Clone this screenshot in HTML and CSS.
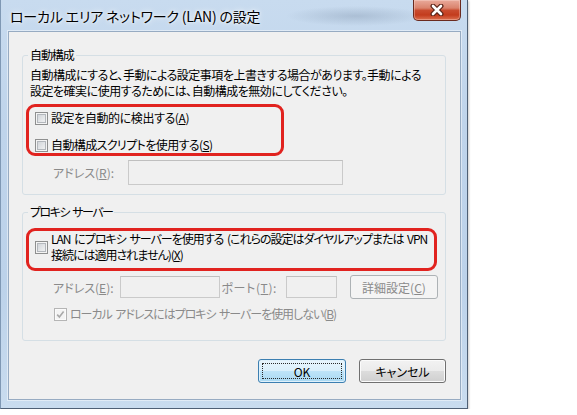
FILE: index.html
```html
<!DOCTYPE html>
<html lang="ja">
<head>
<meta charset="utf-8">
<title>ローカル エリア ネットワーク (LAN) の設定</title>
<link rel="stylesheet" href="styles.css">
</head>
<body>
<div class="window">
  <div class="titlebar">
    <span class="title">ローカル エリア ネットワーク (LAN) の設定</span>
    <div class="close" aria-label="閉じる">
      <svg width="16" height="12" viewBox="0 0 16 12">
        <path d="M4 2 L12 10 M12 2 L4 10" stroke="#5a2418" stroke-width="5" stroke-linecap="round" fill="none"/>
        <path d="M4 2 L12 10 M12 2 L4 10" stroke="#ffffff" stroke-width="2.6" stroke-linecap="round" fill="none"/>
      </svg>
    </div>
  </div>
  <div class="client">
    <fieldset class="group g1">
      <legend class="leg1">自動構成</legend>
      <p class="desc">自動構成にすると、手動による設定事項を上書きする場合があります。手動による<br>設定を確実に使用するためには、自動構成を無効にしてください。</p>
      <div class="mark mark1">
        <label class="check"><span class="box"></span><span>設定を自動的に検出する(<u>A</u>)</span></label>
        <label class="check"><span class="box"></span><span class="kata">自動構成スクリプトを使用する(<u>S</u>)</span></label>
      </div>
      <div class="row row-r">
        <span class="dlabel lab-r">アドレス(<u>R</u>):</span>
        <span class="input in-r"></span>
      </div>
    </fieldset>
    <fieldset class="group g2">
      <legend class="leg2">プロキシ サーバー</legend>
      <div class="mark mark2">
        <label class="check multi"><span class="box"></span><span class="lan">LAN にプロキシ サーバーを使用する (これらの設定はダイヤルアップまたは VPN<br>接続には適用されません)(<u>X</u>)</span></label>
      </div>
      <div class="row row-e">
        <span class="dlabel lab-e">アドレス(<u>E</u>):</span>
        <span class="input in-e"></span>
        <span class="dlabel lab-t">ポート(<u>T</u>):</span>
        <span class="input in-t"></span>
        <span class="btn disabled">詳細設定(<u>C</u>)</span>
      </div>
      <label class="check bypass"><span class="box checked-dis"><svg width="11" height="11" viewBox="0 0 11 11"><path d="M2.2 5.6 L4.4 8 L8.6 2.6" stroke="#a9a9a9" stroke-width="1.6" fill="none"/></svg></span><span class="dis">ローカル アドレスにはプロキシ サーバーを使用しない(<u>B</u>)</span></label>
    </fieldset>
    <div class="actions">
      <span class="btn ok"><span class="focus">OK</span></span>
      <span class="btn cancel">キャンセル</span>
    </div>
  </div>
</div>
</body>
</html>
```
FILE: styles.css
```css
html, body {
  margin: 0;
  padding: 0;
  background: #ffffff;
}

body {
  font-family: "Noto Sans CJK JP", "Noto Sans", sans-serif;
  font-size: 12px;
  color: #000;
  font-feature-settings: "palt";
  letter-spacing: -0.4px;
}

.window {
  width: 468px;
  height: 409px;
  box-sizing: border-box;
  display: flex;
  flex-direction: column;
  border-left: 1px solid #7f98b4;
  border-right: 1px solid #4f6075;
  border-bottom: 1px solid #4f6075;
  background:
    radial-gradient(ellipse 70px 10px at 355px 16px, rgba(120, 140, 165, 0.35), rgba(120, 140, 165, 0)),
    linear-gradient(to bottom, #c8dbef 0%, #bfd4eb 30%, #bcd2ea 70%, #c9dcef 100%);
  box-shadow: 1px 1px 2px rgba(0, 0, 0, 0.2);
}

.titlebar {
  height: 31px;
  display: flex;
  align-items: flex-start;
  padding-left: 9px;
  flex: none;
}

.title {
  font-size: 14px;
  line-height: 30px;
  margin-top: 1px;
  letter-spacing: -0.2px;
  color: #000;
  text-shadow: 0 0 6px rgba(255, 255, 255, 0.95), 0 0 3px rgba(255, 255, 255, 0.9);
}

.close {
  margin-left: auto;
  margin-right: 6px;
  width: 48px;
  height: 21px;
  box-sizing: border-box;
  border: 1px solid #6a2a1f;
  border-top: none;
  border-radius: 0 0 5px 5px;
  background: linear-gradient(to bottom, #e9aa9b 0%, #da836d 40%, #c94b2e 52%, #c33c1d 75%, #dc7050 100%);
  box-shadow: inset 0 0 0 1px rgba(255, 230, 220, 0.35);
  display: flex;
  align-items: center;
  justify-content: center;
}

.client {
  flex: 1;
  margin: 0 6px 8px 7px;
  border: 1px solid #97abc2;
  background: #f0f0f0;
  padding: 0 14px 0 13px;
  display: flex;
  flex-direction: column;
  box-shadow: 0 0 0 1px rgba(255, 255, 255, 0.45);
}

.group {
  margin: 0;
  padding: 0 7px 0 7px;
  border: 1px solid #d5dfe5;
  border-radius: 3px;
  min-width: 0;
}

.group legend {
  padding: 0 2px;
  margin-left: -2px;
  line-height: 16px;
  font-size: 12px;
}

.leg1 {
  letter-spacing: -1.1px;
}

.leg2 {
  letter-spacing: -1.5px;
  word-spacing: 2px;
}

.g1 {
  margin-top: 15px;
  padding-top: 4px;
  padding-bottom: 9px;
}

.g2 {
  margin-top: 9px;
  padding-top: 8px;
  padding-bottom: 18px;
}

.desc {
  margin: 0;
  line-height: 16px;
  white-space: nowrap;
  letter-spacing: -0.5px;
}

.mark {
  border: 3px solid #e1231f;
  border-radius: 9px;
  margin-left: -4px;
  padding-left: 6px;
  display: flex;
  flex-direction: column;
}

.mark1 {
  width: 258px;
  box-sizing: border-box;
  height: 52px;
  margin-top: 5px;
  padding-top: 3px;
  gap: 11px;
}

.mark2 {
  width: 411px;
  box-sizing: border-box;
  height: 43px;
  padding-bottom: 5px;
}

.check {
  display: flex;
  align-items: center;
  line-height: 16px;
  white-space: nowrap;
}

.check .box {
  flex: none;
  margin-right: 3px;
}

.kata {
  letter-spacing: -0.6px;
}

.lan {
  letter-spacing: -1px;
  word-spacing: 2px;
}

.box {
  width: 13px;
  height: 13px;
  box-sizing: border-box;
  border: 1px solid #8e8f8f;
  background: linear-gradient(135deg, #c9cdd2 0%, #e6e8ea 60%, #f6f6f6 100%);
  box-shadow: inset 0 0 0 1px #f4f4f4, inset 0 0 0 2px #b3b7bc;
}

.box.checked-dis {
  border-color: #b5b5b5;
  background: #f4f4f4;
  box-shadow: inset 0 0 0 1px #fbfbfb;
  display: flex;
  align-items: center;
  justify-content: center;
}

.row {
  display: flex;
  align-items: center;
}

.row-r {
  margin-top: 4px;
  height: 25px;
}

.row-e {
  margin-top: 4px;
  height: 24px;
}

.dlabel {
  color: #8a8a8a;
  white-space: nowrap;
  letter-spacing: 0;
}

.lab-r {
  margin-left: 23px;
  width: 75px;
}

.lab-e {
  margin-left: 23px;
  width: 67px;
}

.lab-t {
  margin-left: 2px;
  width: 65px;
  letter-spacing: 0.6px;
}

.input {
  display: block;
  box-sizing: border-box;
  border: 1px solid #cacaca;
  border-top-color: #bfbfbf;
  background: #f0f0f0;
  flex: none;
}

.in-r {
  width: 215px;
  height: 25px;
}

.in-e {
  width: 100px;
  height: 22px;
}

.in-t {
  width: 51px;
  height: 22px;
}

.btn {
  display: flex;
  align-items: center;
  justify-content: center;
  box-sizing: border-box;
  height: 24px;
  border: 1px solid #707070;
  border-radius: 3px;
  background: linear-gradient(to bottom, #f2f2f2 0%, #ebebeb 50%, #dddddd 50%, #cfcfcf 100%);
  box-shadow: inset 0 0 0 1px #fbfbfb;
  white-space: nowrap;
  flex: none;
  letter-spacing: 0;
}

.btn.disabled {
  margin-left: 13px;
  width: 88px;
  border-color: #adb2b5;
  background: #f4f4f4;
  color: #8a8a8a;
  box-shadow: none;
}

.bypass {
  margin-top: 7px;
  margin-left: 24px;
}

.dis {
  color: #8a8a8a;
  letter-spacing: -1.05px;
  word-spacing: 2px;
}

.actions {
  display: flex;
  justify-content: flex-end;
  gap: 13px;
  margin-top: 18px;
}

.ok {
  width: 88px;
  border-color: #3c7fb1;
  background: linear-gradient(to bottom, #e8f5fc 0%, #d9effb 50%, #bee4f8 50%, #a9d8f2 100%);
  box-shadow: inset 0 0 0 1px #dff1fb;
  padding: 3px;
}

.ok .focus {
  flex: 1;
  align-self: stretch;
  display: flex;
  align-items: center;
  justify-content: center;
  border: 1px dotted #2a2a2a;
}

.cancel {
  width: 87px;
}
```
